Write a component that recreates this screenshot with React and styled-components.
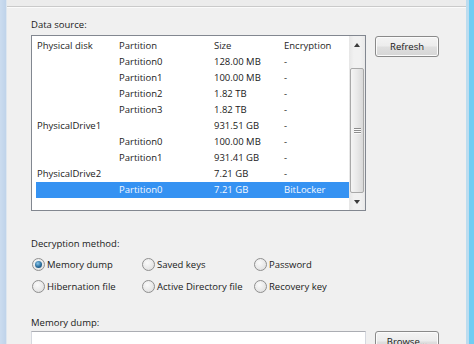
import React from 'react';
import styled, { createGlobalStyle } from 'styled-components';

const GlobalStyle = createGlobalStyle`
  html, body {
    margin: 0;
    padding: 0;
    background: #f0f0f0;
  }
  body {
    font-family: "Open Sans", "Noto Sans", sans-serif;
    font-size: 9.5px;
    color: #1a1a1a;
  }
`;

const rows = [
  { disk: '', part: 'Partition0', size: '128.00 MB', enc: '-' },
  { disk: '', part: 'Partition1', size: '100.00 MB', enc: '-' },
  { disk: '', part: 'Partition2', size: '1.82 TB', enc: '-' },
  { disk: '', part: 'Partition3', size: '1.82 TB', enc: '-' },
  { disk: 'PhysicalDrive1', part: '', size: '931.51 GB', enc: '-' },
  { disk: '', part: 'Partition0', size: '100.00 MB', enc: '-' },
  { disk: '', part: 'Partition1', size: '931.41 GB', enc: '-' },
  { disk: 'PhysicalDrive2', part: '', size: '7.21 GB', enc: '-' },
  { disk: '', part: 'Partition0', size: '7.21 GB', enc: 'BitLocker', selected: true },
];

const methods = [
  { label: 'Memory dump', checked: true },
  { label: 'Saved keys' },
  { label: 'Password' },
  { label: 'Hibernation file' },
  { label: 'Active Directory file' },
  { label: 'Recovery key' },
];

const ScrollArrow = ({ down }) => (
  <ArrowBox>
    <Triangle $down={down} />
  </ArrowBox>
);

const Radio = ({ label, checked }) => (
  <RadioItem>
    <RadioCircle $checked={checked} />
    <span>{label}</span>
  </RadioItem>
);

function App() {
  return (
    <Window>
      <GlobalStyle />
      <FrameLeft />
      <Content>
        <TopBand />
        <Body>
          <Label>Data source:</Label>
          <DataRow>
            <ListBox>
              <Table>
                <HeaderRow>
                  <HeadCell>Physical disk</HeadCell>
                  <HeadCell>Partition</HeadCell>
                  <HeadCell>Size</HeadCell>
                  <HeadCell>Encryption</HeadCell>
                </HeaderRow>
                {rows.map((r, i) => (
                  <ItemRow key={i} $selected={r.selected}>
                    <Cell $first>{r.disk}</Cell>
                    <Cell>{r.part}</Cell>
                    <Cell>{r.size}</Cell>
                    <Cell>{r.enc}</Cell>
                  </ItemRow>
                ))}
              </Table>
              <ScrollBar>
                <ScrollArrow />
                <Track>
                  <Thumb>
                    <Grip />
                  </Thumb>
                </Track>
                <ScrollArrow down />
              </ScrollBar>
            </ListBox>
            <SideColumn>
              <Button>Refresh</Button>
            </SideColumn>
          </DataRow>

          <Label $top={25}>Decryption method:</Label>
          <RadioGrid>
            {methods.map((m) => (
              <Radio key={m.label} label={m.label} checked={m.checked} />
            ))}
          </RadioGrid>

          <Label $top={18}>Memory dump:</Label>
          <InputRow>
            <TextBox />
            <Button>Browse...</Button>
          </InputRow>
        </Body>
      </Content>
      <FrameRight />
    </Window>
  );
}

export default App;

const Window = styled.div`
  display: flex;
  width: 474px;
  height: 344px;
  overflow: hidden;
  background: #f0f0f0;
`;

const FrameLeft = styled.div`
  flex: none;
  width: 6px;
  background: linear-gradient(to right, #cbdcef, #bfd3ea);
  border-right: 1px solid #dde6ef;
`;

const FrameRight = styled.div`
  flex: none;
  width: 5px;
  border-left: 3px solid #bcdcef;
  background: #6fcdf3;
`;

const Content = styled.div`
  display: flex;
  flex-direction: column;
  flex: 1;
  min-width: 0;
`;

const TopBand = styled.div`
  flex: none;
  height: 6px;
  background: #ececec;
  border-bottom: 1px solid #cacaca;
  box-shadow: 0 1px 0 #fbfbfb;
`;

const Body = styled.div`
  display: flex;
  flex-direction: column;
  padding: 10px 0 0 24px;
`;

const Label = styled.div`
  line-height: 15px;
  height: 15px;
  margin-top: ${(p) => p.$top || 0}px;
`;

const DataRow = styled.div`
  display: flex;
  align-items: flex-start;
  gap: 9px;
  margin-top: 3px;
`;

const ListBox = styled.div`
  display: flex;
  width: 335px;
  height: 176px;
  box-sizing: border-box;
  border: 1px solid #828790;
  background: #fff;
`;

const Table = styled.div`
  flex: 1;
  display: flex;
  flex-direction: column;
`;

const HeaderRow = styled.div`
  display: grid;
  grid-template-columns: 82px 95px 70px 70px;
  height: 18px;
  line-height: 19px;
`;

const HeadCell = styled.div`
  padding-left: 5px;
  white-space: nowrap;
  color: #1e1e1e;
`;

const ItemRow = styled.div`
  display: grid;
  grid-template-columns: 78px 95px 70px 70px;
  height: 16px;
  line-height: 16px;
  margin-left: 4px;
  background: ${(p) => (p.$selected ? '#3592f2' : 'transparent')};
  color: ${(p) => (p.$selected ? '#f4f8ff' : '#1a1a1a')};
`;

const Cell = styled.div`
  padding-left: ${(p) => (p.$first ? 1 : 5)}px;
  white-space: nowrap;
  overflow: hidden;
`;

const ScrollBar = styled.div`
  flex: none;
  width: 16px;
  display: flex;
  flex-direction: column;
  background: linear-gradient(to right, #e6e6e6, #f1f1f1 30%, #f1f1f1 70%, #e9e9e9);
`;

const ArrowBox = styled.div`
  flex: none;
  height: 17px;
  display: flex;
  align-items: center;
  justify-content: center;
`;

const Triangle = styled.span`
  width: 0;
  height: 0;
  border-left: 3.5px solid transparent;
  border-right: 3.5px solid transparent;
  ${(p) => (p.$down ? 'border-top: 4px solid #3c3c3c;' : 'border-bottom: 4px solid #3c3c3c;')}
`;

const Track = styled.div`
  flex: 1;
  display: flex;
  flex-direction: column;
  padding-top: 15px;
`;

const Thumb = styled.div`
  flex: 1;
  margin: 0 1px 0 1px;
  box-sizing: border-box;
  border: 1px solid #a9a9a9;
  border-radius: 2px;
  background: linear-gradient(to right, #f5f5f5, #e9e9e9 50%, #d9d9d9);
  display: flex;
  align-items: center;
  justify-content: center;
`;

const Grip = styled.span`
  width: 7px;
  height: 1px;
  background: #8c8c8c;
  box-shadow: 0 2px 0 #8c8c8c, 0 -2px 0 #8c8c8c, 0 3px 0 #fafafa, 0 1px 0 #fafafa, 0 -1px 0 #fafafa;
`;

const SideColumn = styled.div`
  display: flex;
  flex-direction: column;
  padding-top: 1px;
`;

const Button = styled.div`
  flex: none;
  width: 64px;
  height: 21px;
  box-sizing: border-box;
  border: 1px solid #8a8a8a;
  border-radius: 3px;
  background: linear-gradient(#f4f4f4 0%, #ececec 48%, #dfdfdf 52%, #d6d6d6 100%);
  box-shadow: inset 0 0 0 1px #fbfbfb;
  display: flex;
  align-items: center;
  justify-content: center;
  color: #1a1a1a;
`;

const RadioGrid = styled.div`
  display: grid;
  grid-template-columns: 110px 112px auto;
  grid-auto-rows: 22px;
  margin-top: 2px;
`;

const RadioItem = styled.div`
  display: flex;
  align-items: center;
  gap: 2px;
  white-space: nowrap;
`;

const RadioCircle = styled.span`
  position: relative;
  flex: none;
  width: 13px;
  height: 13px;
  margin-left: 1px;
  box-sizing: border-box;
  border-radius: 50%;
  border: 1px solid #8f8f8f;
  background: radial-gradient(circle at 40% 35%, #fafafa, #e4e4e4 70%, #d9d9d9);

  &::after {
    content: '';
    display: ${(p) => (p.$checked ? 'block' : 'none')};
    position: absolute;
    left: 2px;
    top: 2px;
    width: 7px;
    height: 7px;
    border-radius: 50%;
    background: radial-gradient(circle at 40% 35%, #8ac6ea, #2a6d9c 55%, #143d62);
  }
`;

const InputRow = styled.div`
  display: flex;
  gap: 9px;
  margin-top: 1px;
`;

const TextBox = styled.div`
  width: 335px;
  height: 21px;
  box-sizing: border-box;
  border: 1px solid #d5d8df;
  border-top-color: #abadb3;
  background: #fff;
`;
